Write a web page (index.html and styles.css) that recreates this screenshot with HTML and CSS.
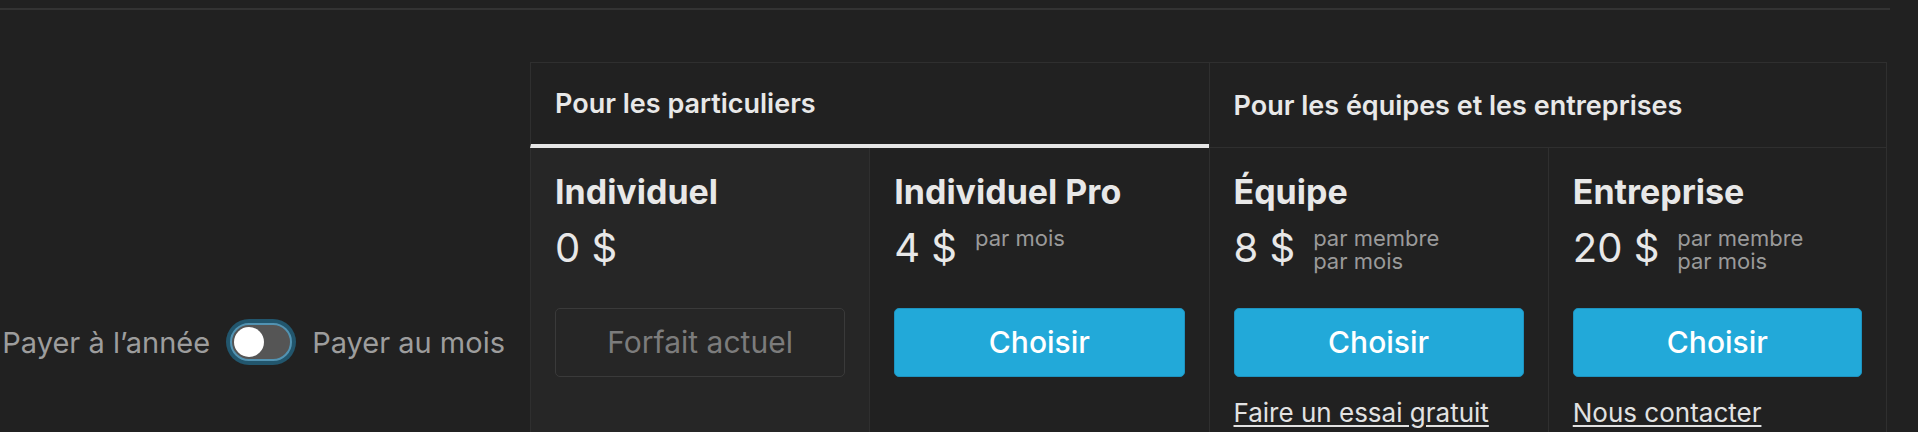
FILE: index.html
```html
<html>
<head>
  <title>Forfaits</title>
  <link rel="stylesheet" href="styles.css">
</head>
<body>
  <div class="topline"></div>

  <div class="pricing">
    <div class="side"></div>
    <div class="group-head group-left">Pour les particuliers</div>
    <div class="group-head group-right">Pour les équipes et les entreprises</div>

    <div class="side"></div>
    <div class="cell info current">
      <div class="plan-name">Individuel</div>
      <div class="price"><span class="amount">0 $</span></div>
    </div>
    <div class="cell info">
      <div class="plan-name">Individuel Pro</div>
      <div class="price"><span class="amount">4 $</span><span class="per">par mois</span></div>
    </div>
    <div class="cell info">
      <div class="plan-name">Équipe</div>
      <div class="price"><span class="amount">8 $</span><span class="per">par membre<br>par mois</span></div>
    </div>
    <div class="cell info last">
      <div class="plan-name">Entreprise</div>
      <div class="price"><span class="amount">20 $</span><span class="per">par membre<br>par mois</span></div>
    </div>

    <div class="side billing">
      <span class="billing-label">Payer à l’année</span>
      <span class="switch"><span class="knob"></span></span>
      <span class="billing-label">Payer au mois</span>
    </div>
    <div class="cell action current"><button class="btn btn-current">Forfait actuel</button></div>
    <div class="cell action"><button class="btn btn-choose">Choisir</button></div>
    <div class="cell action"><button class="btn btn-choose">Choisir</button></div>
    <div class="cell action last"><button class="btn btn-choose">Choisir</button></div>

    <div class="side"></div>
    <div class="cell extra current"></div>
    <div class="cell extra"></div>
    <div class="cell extra"><a href="#" class="plan-link">Faire un essai gratuit</a></div>
    <div class="cell extra last"><a href="#" class="plan-link">Nous contacter</a></div>
  </div>
</body>
</html>
```

FILE: styles.css
```css
body{
    margin:0;
    background:#212121;
    color:#e8e8e8;
    font-family:Inter, "Noto Sans", sans-serif;
}

.topline{
    margin-top:8px;
    margin-right:28px;
    height:2px;
    background:#333;
}

.pricing{
    display:grid;
    grid-template-columns:530px repeat(4, 1fr);
    margin-top:52px;
    margin-right:31px;
}

.group-head{
    grid-column:span 2;
    display:flex;
    align-items:center;
    height:84px;
    padding:0 24px;
    border-top:1px solid #2f2f2f;
    border-left:1px solid #2f2f2f;
    font-size:27px;
    font-weight:600;
    color:#e8e8e8;
    white-space:nowrap;
}
.group-left{
    border-bottom:4px solid #e6e6e6;
    height:81px;
}
.group-right{
    border-right:1px solid #2f2f2f;
    border-bottom:1px solid #2f2f2f;
}

.cell{
    border-left:1px solid #2f2f2f;
    padding-left:24px;
    padding-right:24px;
}
.cell.last{
    border-right:1px solid #2f2f2f;
}
.current{
    background:#262626;
}

.info{
    padding-top:24px;
    padding-bottom:35px;
}

.plan-name{
    font-size:34px;
    font-weight:700;
    line-height:1.2;
}

.price{
    display:flex;
    align-items:flex-start;
    gap:18px;
    margin-top:11px;
}
.amount{
    font-size:40px;
    font-weight:400;
    line-height:48px;
    white-space:nowrap;
}
.per{
    margin-top:3px;
    font-size:22px;
    line-height:23px;
    color:#9a9a9a;
    white-space:nowrap;
}

.btn{
    display:block;
    width:100%;
    height:69px;
    border-radius:5px;
    font-family:Inter, "Noto Sans", sans-serif;
    font-size:30px;
    cursor:pointer;
}
.btn-choose{
    background:#22a9d9;
    border:1px solid #1d93c0;
    color:#fff;
    font-weight:500;
}
.btn-current{
    background:transparent;
    border:1px solid #3a3a3a;
    color:#7c7c7c;
    font-weight:400;
}

.extra{
    padding-top:20px;
    padding-bottom:40px;
}
.plan-link{
    font-size:26px;
    line-height:31px;
    color:#e2e2e2;
    text-decoration:underline;
    text-underline-offset:3px;
}

.billing{
    display:flex;
    align-items:center;
    justify-content:flex-end;
    gap:20px;
    padding-right:25px;
}
.billing-label{
    font-size:29px;
    color:#9d9d9d;
    white-space:nowrap;
}

.switch{
    display:flex;
    align-items:center;
    box-sizing:border-box;
    width:62px;
    height:38px;
    padding:2px;
    border:2px solid #5293b2;
    border-radius:19px;
    background:#555;
    box-shadow:0 0 0 4px #22566d;
    flex-shrink:0;
}
.knob{
    width:30px;
    height:30px;
    border-radius:50%;
    background:#fff;
}
```
